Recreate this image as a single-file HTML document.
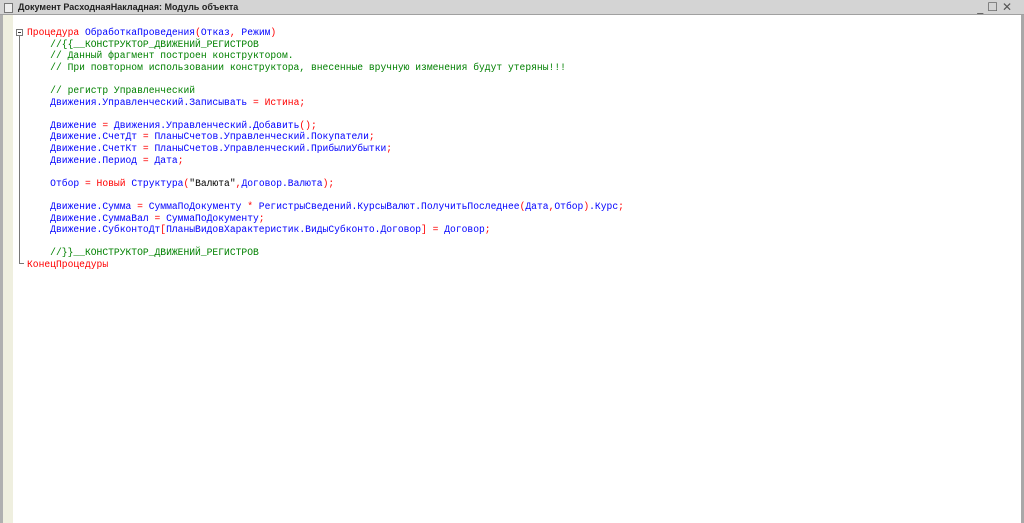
<!DOCTYPE html><html><head><meta charset="utf-8"><style>
html,body{margin:0;padding:0;width:1024px;height:523px;overflow:hidden;background:#fff}
.title{position:absolute;left:0;top:0;width:1024px;height:14px;background:#d4d4d4;border-bottom:1px solid #a0a0a0;font:bold 9px "Liberation Sans","DejaVu Sans",sans-serif;color:#222;line-height:14px}
.title span{position:absolute;left:18px;top:0}
.ico{position:absolute;left:4px;top:3px;width:7px;height:8px;border:1px solid #777;background:#eee}
.btns{position:absolute;right:8px;top:0;font:12px "DejaVu Sans",sans-serif;color:#555;letter-spacing:4px}
.lb{position:absolute;left:0;top:15px;width:3px;height:508px;background:#b0b0b0}
.gut{position:absolute;left:3px;top:15px;width:10px;height:508px;background:#efefdf}
.rb{position:absolute;left:1021px;top:15px;width:3px;height:508px;background:#a8a8a8}
.code{position:absolute;left:27px;top:27px;font:9.67px/11.6px "Liberation Mono","DejaVu Sans Mono",monospace;white-space:pre;color:#0000ff}
.r{color:#ff0000}.g{color:#008000}.k{color:#000}
.fold{position:absolute;left:16px;top:29px;width:5px;height:5px;border:1px solid #777;background:#fff}
.fold:after{content:"";position:absolute;left:1px;top:2px;width:3px;height:1px;background:#333}
.vl{position:absolute;left:19px;top:36px;width:1px;height:228px;background:#777}
.hl{position:absolute;left:19px;top:263px;width:5px;height:1px;background:#777}
</style></head><body>
<div class="title"><div class="ico"></div><span>Документ РасходнаяНакладная: Модуль объекта</span><div class="btns">_☐✕</div></div>
<div class="lb"></div><div class="gut"></div><div class="rb"></div>
<div class="fold"></div><div class="vl"></div><div class="hl"></div>
<div class="code"><span class="r">Процедура</span> ОбработкаПроведения<span class="r">(</span>Отказ<span class="r">,</span> Режим<span class="r">)</span>
<span class="g">    //{{__КОНСТРУКТОР_ДВИЖЕНИЙ_РЕГИСТРОВ</span>
<span class="g">    // Данный фрагмент построен конструктором.</span>
<span class="g">    // При повторном использовании конструктора, внесенные вручную изменения будут утеряны!!!</span>

<span class="g">    // регистр Управленческий</span>
    Движения.Управленческий.Записывать <span class="r">=</span> <span class="r">Истина;</span>

    Движение <span class="r">=</span> Движения.Управленческий.Добавить<span class="r">();</span>
    Движение.СчетДт <span class="r">=</span> ПланыСчетов.Управленческий.Покупатели<span class="r">;</span>
    Движение.СчетКт <span class="r">=</span> ПланыСчетов.Управленческий.ПрибылиУбытки<span class="r">;</span>
    Движение.Период <span class="r">=</span> Дата<span class="r">;</span>

    Отбор <span class="r">= Новый</span> Структура<span class="r">(</span><span class="k">"Валюта"</span><span class="r">,</span>Договор.Валюта<span class="r">);</span>

    Движение.Сумма <span class="r">=</span> СуммаПоДокументу <span class="r">*</span> РегистрыСведений.КурсыВалют.ПолучитьПоследнее<span class="r">(</span>Дата<span class="r">,</span>Отбор<span class="r">)</span>.Курс<span class="r">;</span>
    Движение.СуммаВал <span class="r">=</span> СуммаПоДокументу<span class="r">;</span>
    Движение.СубконтоДт<span class="r">[</span>ПланыВидовХарактеристик.ВидыСубконто.Договор<span class="r">] =</span> Договор<span class="r">;</span>

<span class="g">    //}}__КОНСТРУКТОР_ДВИЖЕНИЙ_РЕГИСТРОВ</span>
<span class="r">КонецПроцедуры</span></div>
</body></html>
